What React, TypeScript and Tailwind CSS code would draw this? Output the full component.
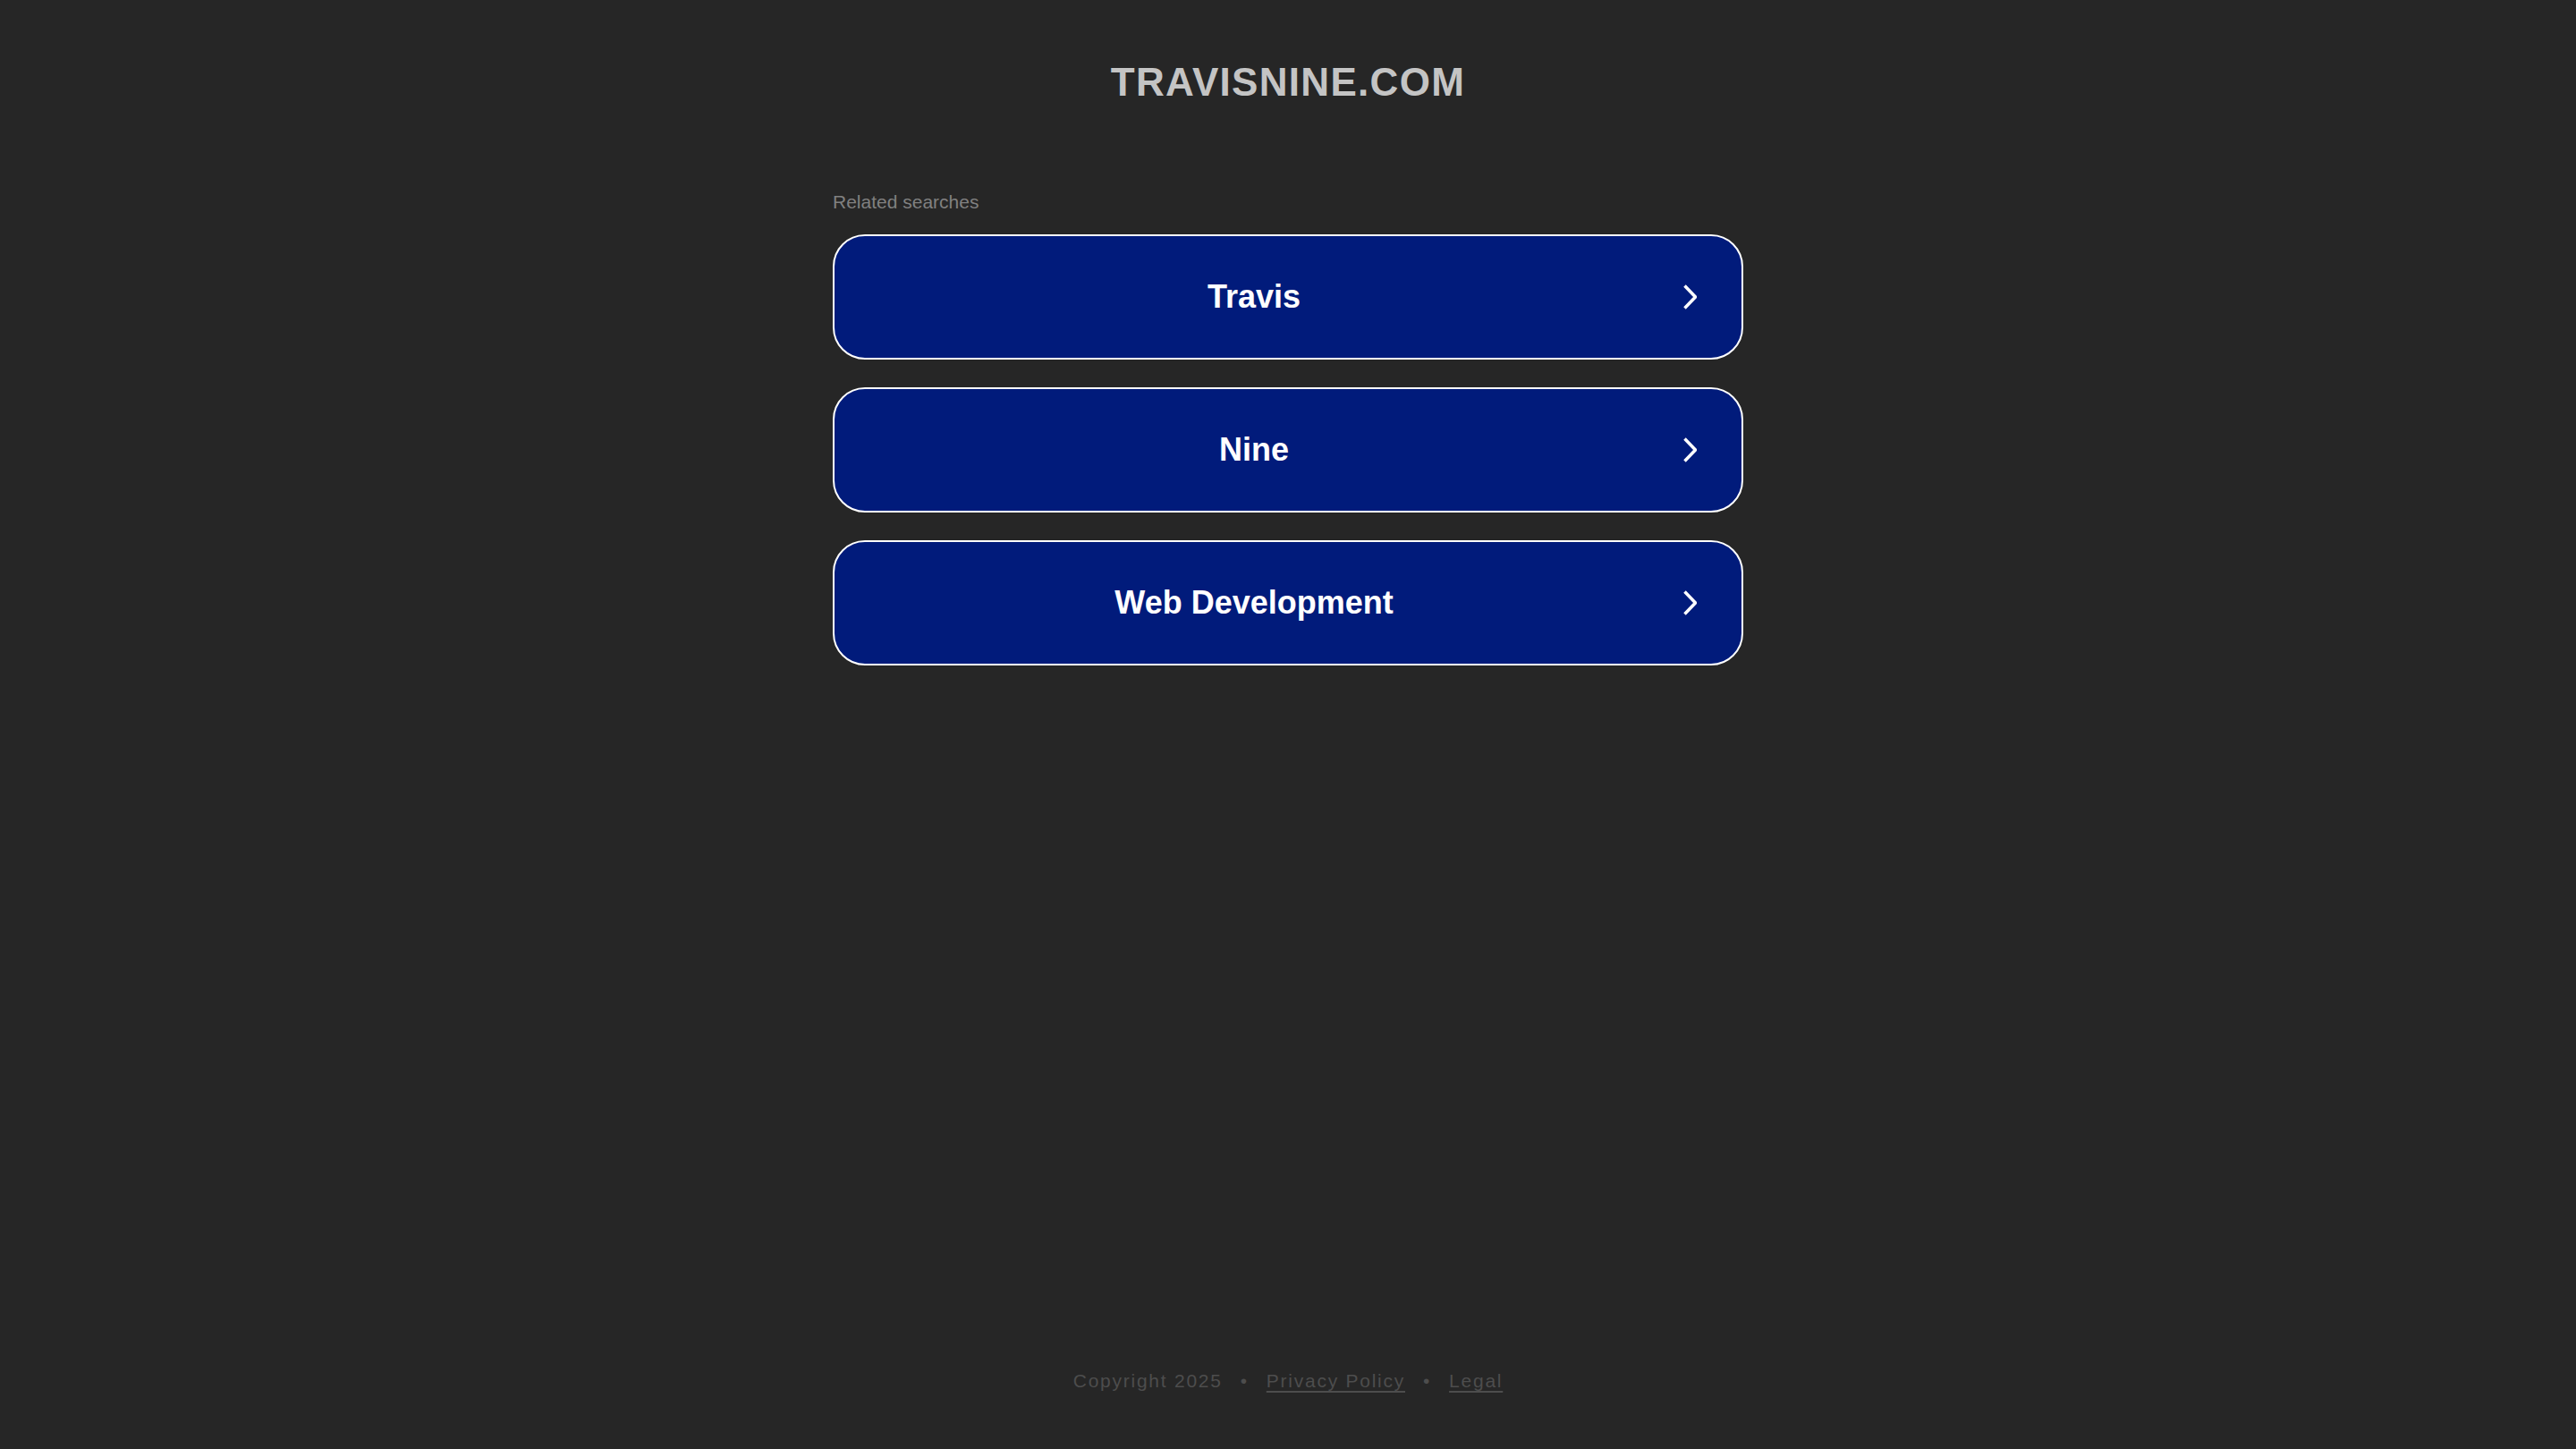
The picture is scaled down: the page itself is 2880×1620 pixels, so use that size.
import * as React from "react"

const searches = ["Travis", "Nine", "Web Development"]

function Chevron() {
	return (
		<svg width="16" height="28" viewBox="0 0 16 28" fill="none" className="ml-[58px] mr-[2px] shrink-0">
			<path d="M2.5 1.5 L14.5 14 L2.5 26.5" stroke="#ffffff" strokeWidth="3.5" />
		</svg>
	)
}

function SearchLink({ label }: { label: string }) {
	return (
		<a
			href="#"
			className="flex h-[140px] w-full items-center rounded-[36px] border-2 border-white bg-[#011b7b] px-[48px] text-white"
		>
			<span className="flex-1 text-center text-[36px] font-bold leading-[40px]">{label}</span>
			<Chevron />
		</a>
	)
}

export default function App() {
	return (
		<div className="flex min-h-screen flex-col bg-[#262626] font-['Liberation_Sans',Arial,sans-serif]">
			{/* Domain name */}
			<div className="pt-[67px] text-center">
				<h1 className="text-[44px] font-bold leading-[50px] tracking-[1.3px] text-[#c4c4c4]">TRAVISNINE.COM</h1>
			</div>

			{/* Related searches */}
			<div className="mx-auto mt-[97px] w-[1018px]">
				<p className="text-[21px] leading-[24px] text-[#808080]">Related searches</p>
				<div className="mt-[24px] flex flex-col gap-[31px]">
					{searches.map((s) => (
						<SearchLink key={s} label={s} />
					))}
				</div>
			</div>

			{/* Footer */}
			<div className="mt-auto flex items-center justify-center gap-[20px] pb-[60px] text-[21px] leading-[32px] tracking-[1.75px] text-[#4d4d4d]">
				<span>Copyright 2025</span>
				<span>•</span>
				<a href="#" className="underline underline-offset-[4px]">
					Privacy Policy
				</a>
				<span>•</span>
				<a href="#" className="underline underline-offset-[4px]">
					Legal
				</a>
			</div>
		</div>
	)
}
